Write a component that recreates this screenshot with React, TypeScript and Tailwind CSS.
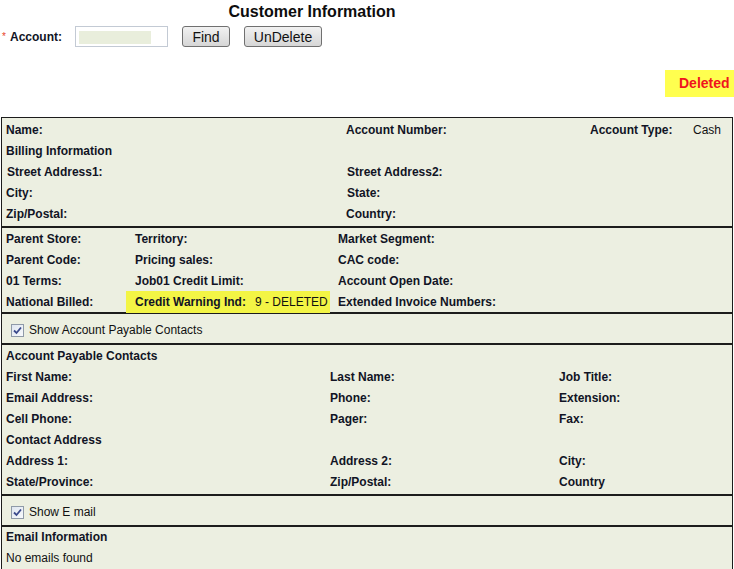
import React from "react";

const font = { fontFamily: '"Liberation Sans", Arial, sans-serif' };

function Check() {
  return (
    <span className="inline-flex h-[13px] w-[13px] items-center justify-center border border-[#8f9aa8] bg-gradient-to-br from-[#dfe6f0] to-[#f7f9fc]">
      <svg width="9" height="9" viewBox="0 0 9 9">
        <path d="M1 4.5 L3.5 7 L8 1.5" fill="none" stroke="#3b4a8c" strokeWidth="1.8" />
      </svg>
    </span>
  );
}

function L({ children, className = "" }: { children?: React.ReactNode; className?: string }) {
  return <span className={"font-bold text-[#111425] " + className}>{children}</span>;
}

export default function App() {
  return (
    <div style={font} className="w-[734px] h-[569px] overflow-hidden bg-white text-[12px] text-[#111]">
      <div className="w-[624px] h-[24px] text-center text-[16px] font-bold leading-[24px] text-[#0d0d0d]">
        Customer Information
      </div>
      <div className="flex h-[25px] items-center">
        <span className="ml-[2px] w-[8px] text-[10px] text-[#e8452a]">*</span>
        <L className="w-[65px]">Account:</L>
        <div className="flex h-[21px] w-[93px] items-start border border-[#c3cad4] bg-white pl-[3px] pt-[4px]">
          <div className="h-[13px] w-[72px] bg-[#e9eedc]" />
        </div>
        <button className="ml-[14px] h-[21px] w-[48px] rounded-[3px] border border-[#707070] bg-gradient-to-b from-[#f2f2f2] to-[#d6d6d6] pt-[1px] text-[14px] leading-[19px] text-[#111]">
          Find
        </button>
        <button className="ml-[14px] h-[21px] w-[78px] rounded-[3px] border border-[#707070] bg-gradient-to-b from-[#f2f2f2] to-[#d6d6d6] pt-[1px] text-[14px] leading-[19px] text-[#111]">
          UnDelete
        </button>
      </div>
      <div className="mt-[21px] flex justify-end">
        <div className="flex h-[27px] w-[69px] items-center pl-[14px] bg-[#ffff4f] text-[14px] font-bold text-[#f0141e]">
          Deleted
        </div>
      </div>
      <div className="ml-[1px] mt-[20px] w-[732px] border-x border-t border-[#1c1c1c] bg-[#ecefe1]">
        {/* Section 1 */}
        <div className="pl-[4px] pt-[1px] pb-[2px]">
          <div className="flex h-[21px] items-center">
            <L className="w-[340px]">Name:</L>
            <L className="w-[244px]">Account Number:</L>
            <L className="w-[103px]">Account Type:</L>
            <span>Cash</span>
          </div>
          <div className="flex h-[21px] items-center">
            <L>Billing Information</L>
          </div>
          <div className="flex h-[21px] items-center">
            <L className="w-[341px] pl-[1px]">Street Address1:</L>
            <L>Street Address2:</L>
          </div>
          <div className="flex h-[21px] items-center">
            <L className="w-[341px]">City:</L>
            <L>State:</L>
          </div>
          <div className="flex h-[21px] items-center">
            <L className="w-[340px]">Zip/Postal:</L>
            <L>Country:</L>
          </div>
        </div>
        {/* Section 2 */}
        <div className="border-t-2 border-[#1c1c1c] pl-[4px]">
          {[
            ["Parent Store:", "Territory:", "Market Segment:"],
            ["Parent Code:", "Pricing sales:", "CAC code:"],
            ["01 Terms:", "Job01 Credit Limit:", "Account Open Date:"],
          ].map((r) => (
            <div key={r[0]} className="flex h-[21px] items-center">
              <L className="w-[120px]">{r[0]}</L>
              <L className="w-[212px] pl-[9px]">{r[1]}</L>
              <L>{r[2]}</L>
            </div>
          ))}
          <div className="flex h-[21px] items-center">
            <L className="w-[120px]">National Billed:</L>
            <div className="flex h-[22px] w-[204px] items-center bg-[#f3f545] pl-[9px]">
              <L className="w-[120px]">Credit Warning Ind:</L>
              <span>9 - DELETED</span>
            </div>
            <L className="ml-[8px]">Extended Invoice Numbers:</L>
          </div>
        </div>
        {/* Section 3 */}
        <div className="flex h-[31px] items-center gap-[5px] border-t-2 border-[#1c1c1c] pl-[9px] pt-[3px]">
          <Check />
          <span>Show Account Payable Contacts</span>
        </div>
        {/* Section 4 */}
        <div className="border-t-2 border-[#1c1c1c] pl-[4px] pb-[2px]">
          <div className="flex h-[21px] items-center">
            <L>Account Payable Contacts</L>
          </div>
          {[
            ["First Name:", "Last Name:", "Job Title:"],
            ["Email Address:", "Phone:", "Extension:"],
            ["Cell Phone:", "Pager:", "Fax:"],
          ].map((r) => (
            <div key={r[0]} className="flex h-[21px] items-center">
              <L className="w-[324px]">{r[0]}</L>
              <L className="w-[229px]">{r[1]}</L>
              <L>{r[2]}</L>
            </div>
          ))}
          <div className="flex h-[21px] items-center">
            <L>Contact Address</L>
          </div>
          {[
            ["Address 1:", "Address 2:", "City:"],
            ["State/Province:", "Zip/Postal:", "Country"],
          ].map((r) => (
            <div key={r[0]} className="flex h-[21px] items-center">
              <L className="w-[324px]">{r[0]}</L>
              <L className="w-[229px]">{r[1]}</L>
              <L>{r[2]}</L>
            </div>
          ))}
        </div>
        {/* Section 5 */}
        <div className="flex h-[31px] items-center gap-[5px] border-t-2 border-[#1c1c1c] pl-[9px] pt-[3px]">
          <Check />
          <span>Show E mail</span>
        </div>
        {/* Section 6 */}
        <div className="border-t-2 border-[#1c1c1c] pl-[4px] h-[60px]">
          <div className="flex h-[20px] items-center">
            <L>Email Information</L>
          </div>
          <div className="flex h-[21px] items-center">
            <span>No emails found</span>
          </div>
        </div>
      </div>
    </div>
  );
}
